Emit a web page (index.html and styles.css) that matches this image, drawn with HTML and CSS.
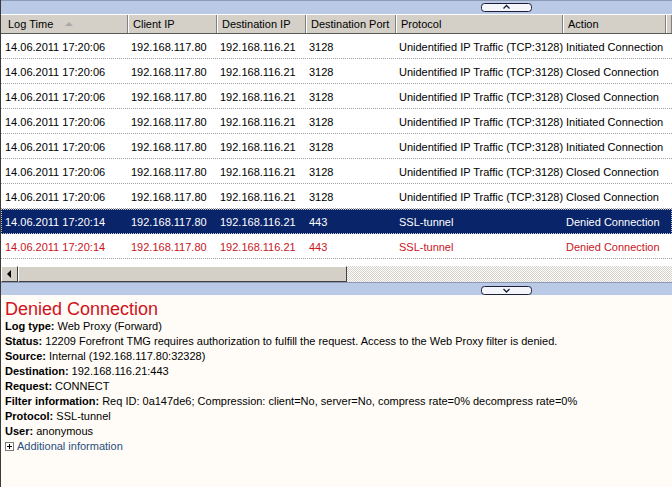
FILE: index.html
```html
<!DOCTYPE html>
<html>
<head>
<meta charset="utf-8">
<link rel="stylesheet" href="styles.css">
</head>
<body>
<div class="window">
  <div class="bar bar-top">
    <svg class="toggle" width="51" height="9" viewBox="0 0 51 9"><rect x="0.5" y="0.5" width="50" height="8" rx="3" fill="#f4f6fb" stroke="#1b1f3a"/><path d="M22.5 5.5 L25.5 2.5 L28.5 5.5" fill="none" stroke="#1b1f3a" stroke-width="1.3"/></svg>
  </div>
  <div class="grid">
    <div class="row head">
      <div class="c hc first">Log Time <span class="sort"></span></div>
      <div class="c hc">Client IP</div>
      <div class="c hc">Destination IP</div>
      <div class="c hc">Destination Port</div>
      <div class="c hc">Protocol</div>
      <div class="c hc">Action</div>
      <div class="c hc"></div>
    </div>
    <div class="row"><div class="c first">14.06.2011 17:20:06</div><div class="c">192.168.117.80</div><div class="c">192.168.116.21</div><div class="c">3128</div><div class="c">Unidentified IP Traffic (TCP:3128)</div><div class="c">Initiated Connection</div><div class="c"></div></div>
    <div class="row"><div class="c first">14.06.2011 17:20:06</div><div class="c">192.168.117.80</div><div class="c">192.168.116.21</div><div class="c">3128</div><div class="c">Unidentified IP Traffic (TCP:3128)</div><div class="c">Closed Connection</div><div class="c"></div></div>
    <div class="row"><div class="c first">14.06.2011 17:20:06</div><div class="c">192.168.117.80</div><div class="c">192.168.116.21</div><div class="c">3128</div><div class="c">Unidentified IP Traffic (TCP:3128)</div><div class="c">Closed Connection</div><div class="c"></div></div>
    <div class="row"><div class="c first">14.06.2011 17:20:06</div><div class="c">192.168.117.80</div><div class="c">192.168.116.21</div><div class="c">3128</div><div class="c">Unidentified IP Traffic (TCP:3128)</div><div class="c">Initiated Connection</div><div class="c"></div></div>
    <div class="row"><div class="c first">14.06.2011 17:20:06</div><div class="c">192.168.117.80</div><div class="c">192.168.116.21</div><div class="c">3128</div><div class="c">Unidentified IP Traffic (TCP:3128)</div><div class="c">Initiated Connection</div><div class="c"></div></div>
    <div class="row"><div class="c first">14.06.2011 17:20:06</div><div class="c">192.168.117.80</div><div class="c">192.168.116.21</div><div class="c">3128</div><div class="c">Unidentified IP Traffic (TCP:3128)</div><div class="c">Closed Connection</div><div class="c"></div></div>
    <div class="row"><div class="c first">14.06.2011 17:20:06</div><div class="c">192.168.117.80</div><div class="c">192.168.116.21</div><div class="c">3128</div><div class="c">Unidentified IP Traffic (TCP:3128)</div><div class="c">Closed Connection</div><div class="c"></div></div>
    <div class="row selected"><div class="c first">14.06.2011 17:20:14</div><div class="c">192.168.117.80</div><div class="c">192.168.116.21</div><div class="c">443</div><div class="c">SSL-tunnel</div><div class="c">Denied Connection</div><div class="c"></div></div>
    <div class="row denied"><div class="c first">14.06.2011 17:20:14</div><div class="c">192.168.117.80</div><div class="c">192.168.116.21</div><div class="c">443</div><div class="c">SSL-tunnel</div><div class="c">Denied Connection</div><div class="c"></div></div>
  </div>
  <div class="hscroll">
    <div class="sbtn"><svg width="5" height="8" viewBox="0 0 5 8"><path d="M4 0 L0 4 L4 8 Z" fill="#000"/></svg></div>
    <div class="thumb"></div>
    <div class="track"></div>
  </div>
  <div class="bar bar-bottom">
    <svg class="toggle" width="51" height="9" viewBox="0 0 51 9"><rect x="0.5" y="0.5" width="50" height="8" rx="3" fill="#f4f6fb" stroke="#1b1f3a"/><path d="M22.5 3 L25.5 6 L28.5 3" fill="none" stroke="#1b1f3a" stroke-width="1.3"/></svg>
  </div>
  <div class="details">
    <div class="title">Denied Connection</div>
    <div class="line"><b>Log type:</b> Web Proxy (Forward)</div>
    <div class="line"><b>Status:</b> 12209 Forefront TMG requires authorization to fulfill the request. Access to the Web Proxy filter is denied.</div>
    <div class="line"><b>Source:</b> Internal (192.168.117.80:32328)</div>
    <div class="line"><b>Destination:</b> 192.168.116.21:443</div>
    <div class="line"><b>Request:</b> CONNECT</div>
    <div class="line"><b>Filter information:</b> Req ID: 0a147de6; Compression: client=No, server=No, compress rate=0% decompress rate=0%</div>
    <div class="line"><b>Protocol:</b> SSL-tunnel</div>
    <div class="line"><b>User:</b> anonymous</div>
    <div class="line more"><svg class="plus" width="9" height="9" viewBox="0 0 9 9"><rect x="0.5" y="0.5" width="8" height="8" fill="#fff" stroke="#7a7a7a"/><path d="M2 4.5 H7 M4.5 2 V7" stroke="#000"/></svg><span class="link">Additional information</span></div>
  </div>
</div>
</body>
</html>
```

FILE: styles.css
```css
html, body {
  margin: 0;
  padding: 0;
  background: #fffcf7;
}
.window {
  width: 672px;
  height: 487px;
  overflow: hidden;
  border-left: 1px solid #3a3a3a;
  box-sizing: border-box;
  font-family: "Liberation Sans", Arial, sans-serif;
  font-size: 11px;
  color: #000;
  display: flex;
  flex-direction: column;
  background: #fffcf7;
}
.bar {
  background: #b9c9e6;
  display: flex;
  justify-content: flex-start;
  flex: none;
  padding-left: 480px;
}
.bar-top {
  height: 14px;
  border-top: 1px solid #8d9ab3;
  box-sizing: border-box;
  align-items: flex-start;
  padding-top: 2px;
}
.bar-bottom {
  height: 13px;
  border-top: 1px solid #8d9ab3;
  box-sizing: border-box;
  align-items: flex-start;
  padding-top: 3px;
}
.toggle {
  display: block;
}
.grid {
  background: #fff;
  flex: none;
}
.row {
  display: grid;
  grid-template-columns: 127px 89px 89px 90px 167px 103px 1fr;
  height: 25px;
  padding-top: 1px;
  border-bottom: 1px dotted #a0a0a0;
  box-sizing: border-box;
  align-items: center;
}
.c {
  padding-left: 3px;
  white-space: nowrap;
  overflow: hidden;
}
.c.first {
  padding-left: 4px;
}
.head {
  height: 20px;
  padding-top: 0;
  background: #d4d0c8;
  border-top: 1px solid #fff;
  border-bottom: 1px solid #5a5a5a;
  align-items: stretch;
}
.hc {
  display: flex;
  align-items: center;
  padding-left: 5px;
  box-shadow: inset -1px 0 #808080, inset 1px 0 #fff;
}
.hc.first {
  padding-left: 7px;
  box-shadow: inset -1px 0 #808080;
}
.sort {
  display: inline-block;
  width: 0;
  height: 0;
  margin-left: 12px;
  border-left: 4px solid transparent;
  border-right: 4px solid transparent;
  border-bottom: 4px solid #a8a8a8;
}
.selected {
  background: #0a246a;
  color: #fff;
  outline: 1px dotted #c8c8c8;
  outline-offset: -1px;
}
.denied {
  color: #c8161d;
}
.hscroll {
  flex: none;
  height: 16px;
  display: flex;
  background: #fff;
  border-top: 7px solid #fff;
}
.sbtn {
  width: 17px;
  height: 16px;
  box-sizing: border-box;
  background: #d4d0c8;
  border-top: 1px solid #fff;
  border-left: 1px solid #fff;
  border-right: 1px solid #404040;
  border-bottom: 1px solid #404040;
  display: flex;
  align-items: center;
  justify-content: center;
}
.sbtn svg { margin-left: -1px; }
.thumb {
  width: 329px;
  height: 16px;
  box-sizing: border-box;
  background: #d4d0c8;
  border-top: 1px solid #fff;
  border-left: 1px solid #fff;
  border-right: 1px solid #404040;
  border-bottom: 1px solid #404040;
}
.track {
  flex: 1;
  height: 16px;
  background: repeating-conic-gradient(#d4d0c8 0 25%, #ffffff 0 50%) 0 0 / 2px 2px;
}
.details {
  flex: 1;
  background: #fffcf7;
  padding: 4px 0 0 4px;
}
.title {
  color: #d0121b;
  font-size: 18px;
  line-height: 20px;
}
.line {
  line-height: 15px;
  white-space: nowrap;
}
.line b {
  font-weight: bold;
}
.more {
  display: flex;
  align-items: center;
}
.plus {
  display: block;
  margin-right: 3px;
}
.link {
  color: #284f7d;
}
```
